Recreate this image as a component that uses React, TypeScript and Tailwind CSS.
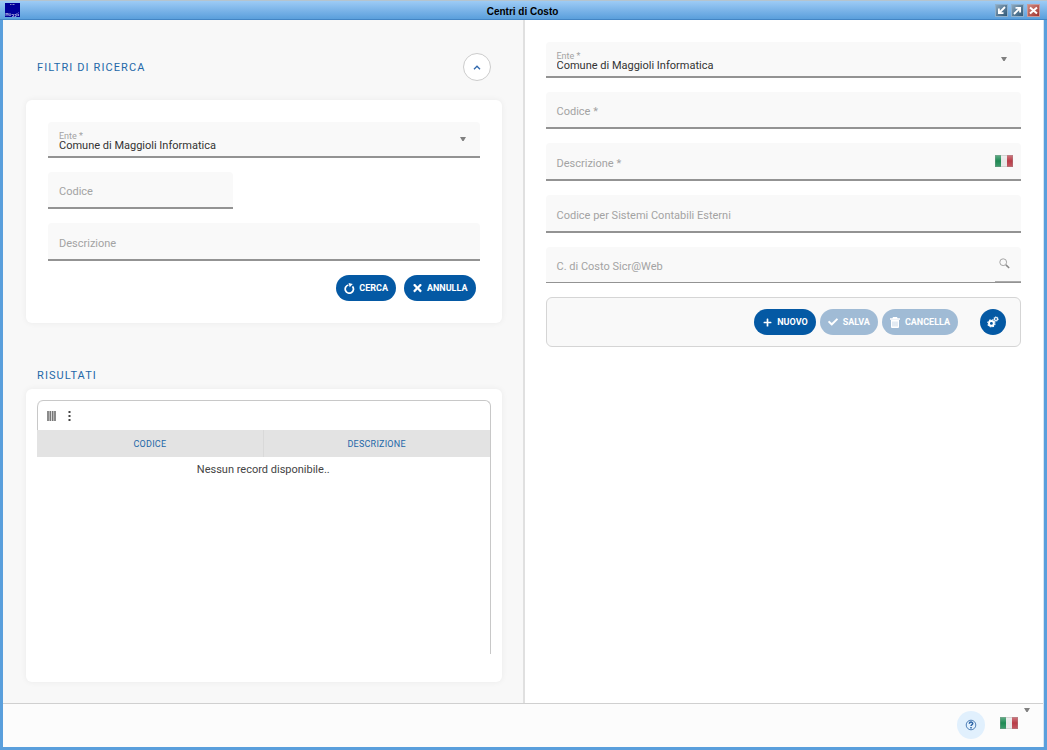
import type { ReactNode } from "react";
import { FaCheck, FaPlus, FaTimes } from "react-icons/fa";

function Flag() {
  return (
    <svg viewBox="0 0 18 12" className="h-3 w-[18px]" aria-hidden="true">
      <defs>
        <linearGradient id="shine" x1="0" y1="0" x2="0" y2="1">
          <stop offset="0" stopColor="#fff" stopOpacity="0.35" />
          <stop offset="0.5" stopColor="#fff" stopOpacity="0.05" />
          <stop offset="1" stopColor="#fff" stopOpacity="0.2" />
        </linearGradient>
      </defs>
      <rect width="6" height="12" fill="#12834a" />
      <rect x="6" width="6" height="12" fill="#e6e6e6" />
      <rect x="12" width="6" height="12" fill="#b5323e" />
      <rect width="18" height="12" fill="url(#shine)" />
      <rect x="0.5" y="0.5" width="17" height="11" fill="none" stroke="#999" strokeOpacity="0.3" />
    </svg>
  );
}

function Caret() {
  return (
    <svg viewBox="0 0 6 4" className="h-1 w-1.5" aria-hidden="true">
      <path d="M0 0h6L3.6 4H2.4z" fill="#808080" />
    </svg>
  );
}

function ReloadIcon() {
  return (
    <svg viewBox="0 0 12 12" className="size-[11px]" fill="none" aria-hidden="true">
      <path d="M4.800 2.200A4.500 4.500 0 1 0 9.200 3.600" stroke="#fff" strokeWidth="1.900" />
      <path d="M5 0l4.600 1.200L6.200 4.600z" fill="#fff" />
    </svg>
  );
}

function TrashIcon() {
  return (
    <svg viewBox="0 0 10 11" className="h-[11px] w-2.5" fill="#fff" aria-hidden="true">
      <path d="M3 0h4l.6 1.300H10v1.400H0V1.300h2.400z" />
      <path
        fillRule="evenodd"
        d="M1 2.700h8V10a1 1 0 0 1-1 1H2a1 1 0 0 1-1-1zM2.700 4.500v5h.6v-5zM4.700 4.500v5h.6v-5zM6.700 4.500v5h.6v-5z"
      />
    </svg>
  );
}

function GearsIcon() {
  return (
    <svg viewBox="0 0 12 12" className="size-3" fill="none" stroke="#fff" aria-hidden="true">
      <circle cx="4.4" cy="7.4" r="2.4" strokeWidth="1.900" />
      <circle cx="4.4" cy="7.4" r="3.6" strokeWidth="1.100" strokeDasharray="1.600 1.228" />
      <circle cx="9" cy="3" r="1.500" strokeWidth="1.200" />
      <circle cx="9" cy="3" r="2.300" strokeWidth="0.800" strokeDasharray="1 0.806" />
    </svg>
  );
}

function SearchIcon() {
  return (
    <svg viewBox="0 0 11 11" className="size-[11px]" fill="none" aria-hidden="true">
      <circle cx="4.2" cy="4.2" r="3.4" stroke="#a5a5a5" strokeWidth="1" />
      <path d="M6.900 6.900l3.300 3.100" stroke="#888" strokeWidth="1.500" />
    </svg>
  );
}

function HelpIcon() {
  return (
    <svg viewBox="0 0 12 12" className="size-3" fill="none" stroke="#2a62a5" aria-hidden="true">
      <circle cx="6" cy="6" r="4.800" strokeWidth="0.800" />
      <path d="M4.300 4.700c.1-2.300 3.500-2.100 3.400-.1C7.600 5.700 6 5.800 6 7.100" strokeWidth="1.500" />
      <path d="M6 8v1.400" strokeWidth="1.500" />
    </svg>
  );
}

function Logo() {
  return (
    <svg viewBox="0 0 15 14" className="h-3.5 w-[15px]" aria-hidden="true">
      <rect width="15" height="14" fill="#000099" />
      <path d="M5 1.500h5" stroke="#8a8ac8" strokeWidth="1" strokeDasharray="1 0.5" />
      <path
        d="M1 13v-3l1 1.500 1-1.500v3M4.500 12.500a1 1 0 1 1 1 0zM7 11.500h1.500v2H7M9.500 11.500h1.500v2H9.500M12 10v3M13.500 11v2M13.500 9.500v.7"
        fill="none"
        stroke="#c9c9ee"
        strokeWidth="0.7"
      />
    </svg>
  );
}

type FieldProps = {
  id: string;
  label: string;
  className?: string;
  children?: ReactNode;
};

function Field({ id, label, className = "h-[38px] border-b-2", children }: FieldProps) {
  return (
    <div className={`flex items-center rounded-t-sm border-[#939393] bg-[#f9f9f9] pl-[11px] ${className}`}>
      <label htmlFor={id} className="pt-1.5 text-[11px] text-[#a3a3a3]">
        {label}
      </label>
      <input id={id} type="text" className="h-full min-w-0 flex-1 bg-transparent px-1 text-[11px] outline-none" />
      {children}
    </div>
  );
}

function EnteSelect({ id }: { id: string }) {
  return (
    <div className="relative flex h-9 flex-col justify-end rounded-t-sm border-b-2 border-[#939393] bg-[#f9f9f9] px-[11px] pb-1">
      <label htmlFor={id} className="text-[9px] leading-2 text-[#a3a3a3]">
        Ente *
      </label>
      <select id={id} className="h-3 w-full appearance-none text-[11px] leading-3 text-[#333] outline-none">
        <option>Comune di Maggioli Informatica</option>
      </select>
      <span className="pointer-events-none absolute top-[15px] right-3.5">
        <Caret />
      </span>
    </div>
  );
}

type PillProps = { icon: ReactNode; children: string; disabled?: boolean };

function Pill({ icon, children, disabled }: PillProps) {
  return (
    <button
      type="button"
      disabled={disabled}
      className="flex h-[26px] items-center gap-1 rounded-full bg-[#0459a4] px-2 text-[9px] font-bold text-white disabled:bg-[#a0bbd5]"
    >
      <span className="flex w-[11px] justify-center">{icon}</span>
      <span className="pt-0.5">{children}</span>
    </button>
  );
}

const windowButton =
  "flex size-[13px] items-center justify-center border border-[#8fb0cc] bg-linear-to-br from-[#8ba7bd] to-[#2f5877]";

function TitleBar() {
  return (
    <header className="grid h-5 shrink-0 grid-cols-[1fr_auto_1fr] items-center border-t border-b border-t-[#b5c4ce] border-b-[#4385c4] bg-linear-to-b from-[#9dcbf5] to-[#5a9fdc] pr-[7px] pl-[5px]">
      <Logo />
      <h1 className="pt-0.5 font-['Liberation_Sans',sans-serif] text-[10px] font-bold text-black">Centri di Costo</h1>
      <div className="flex justify-end gap-[3px]">
        <button type="button" aria-label="Riduci" className={windowButton}>
          <svg viewBox="0 0 9 9" className="size-[9px]" fill="none" stroke="#fff" strokeWidth="1.800">
            <path d="M8 1L2.500 6.500M1.900 2.500v4.600h4.600" />
          </svg>
        </button>
        <button type="button" aria-label="Ingrandisci" className={windowButton}>
          <svg viewBox="0 0 9 9" className="size-[9px]" fill="none" stroke="#fff" strokeWidth="1.800">
            <path d="M1 8l5.500-5.500M2.500 1.900h4.600v4.600" />
          </svg>
        </button>
        <button
          type="button"
          aria-label="Chiudi"
          className="flex size-[13px] items-center justify-center border border-[#c99a9a] bg-linear-to-br from-[#d08a80] to-[#a03030]"
        >
          <svg viewBox="0 0 9 9" className="size-[9px]" fill="none" stroke="#fff" strokeWidth="2">
            <path d="M1 1.500l7 6M8 1.500l-7 6" />
          </svg>
        </button>
      </div>
    </header>
  );
}

const card = "rounded-md bg-white shadow-[0_0_6px_rgba(0,0,0,0.06)]";
const heading = "text-[11px] tracking-widest text-[#2468a8]";

function Filters() {
  return (
    <section>
      <div className="flex items-center justify-between px-[11px]">
        <h2 className={`pt-0.5 ${heading}`}>FILTRI DI RICERCA</h2>
        <button
          type="button"
          aria-label="Comprimi filtri"
          className="flex size-7 items-center justify-center rounded-full border border-[#ccc] bg-white"
        >
          <svg viewBox="0 0 8 5" className="h-[5px] w-2" fill="none" stroke="#2f68ad" strokeWidth="1.300">
            <path d="M1 4.300L4 1.200l3 3.100" />
          </svg>
        </button>
      </div>
      <form className={`mt-[19px] p-[22px] ${card}`}>
        <div className="flex flex-col gap-[14px]">
          <EnteSelect id="filter-ente" />
          <Field id="filter-codice" label="Codice" className="h-[37px] w-3/7 border-b-2" />
          <Field id="filter-descrizione" label="Descrizione" />
        </div>
        <div className="mt-[14px] flex justify-end gap-2 pr-1">
          <Pill icon={<ReloadIcon />}>CERCA</Pill>
          <Pill icon={<FaTimes className="size-3" />}>ANNULLA</Pill>
        </div>
      </form>
    </section>
  );
}

function Results() {
  return (
    <section className="mt-[45px] flex min-h-0 flex-1 flex-col">
      <h2 className={`pl-[11px] leading-4 ${heading}`}>RISULTATI</h2>
      <div className={`mt-[5px] min-h-0 flex-1 px-[11px] pt-[11px] pb-7 ${card}`}>
        <div className="flex h-full flex-col rounded-t-md border-t border-r border-[#c8c8c8]">
          <div className="flex h-[29px] shrink-0 items-center gap-3 rounded-tl-md border-l border-[#c8c8c8] pl-[9px]">
            <button type="button" aria-label="Colonne">
              <svg viewBox="0 0 9 10" className="h-2.5 w-[9px]" stroke="#777" strokeWidth="1.700">
                <path d="M1 0v10M3.300 0v10M5.700 0v10M8 0v10" />
              </svg>
            </button>
            <button type="button" aria-label="Altre opzioni">
              <svg viewBox="0 0 3 10" className="h-2.5 w-[3px]" fill="#444">
                <path d="M.5 0h2v2h-2zM.5 4h2v2h-2zM.5 8h2v2h-2z" />
              </svg>
            </button>
          </div>
          <table className="w-full table-fixed border-collapse">
            <thead>
              <tr className="h-[27px] bg-[#e3e3e3] text-[9px] tracking-wide text-[#2468a8]">
                <th className="border-r border-[#d9d9d9] pt-0.5 font-normal">CODICE</th>
                <th className="pt-0.5 font-normal">DESCRIZIONE</th>
              </tr>
            </thead>
            <tbody>
              <tr className="h-[26px]">
                <td colSpan={2} className="text-center text-[11px] text-[#444]">
                  Nessun record disponibile..
                </td>
              </tr>
            </tbody>
          </table>
        </div>
      </div>
    </section>
  );
}

function Detail() {
  return (
    <form className="min-w-0 flex-1 border-l-2 border-[#e0e0e0] bg-white pt-[22px] pr-[22px] pl-[21px]">
      <div className="flex flex-col gap-[14px]">
        <EnteSelect id="ente" />
        <Field id="codice" label="Codice *" className="h-[37px] border-b-2" />
        <Field id="descrizione" label="Descrizione *">
          <button type="button" aria-label="Lingua" className="pr-2">
            <Flag />
          </button>
        </Field>
        <Field id="codice-esterni" label="Codice per Sistemi Contabili Esterni" />
        <Field id="costo" label="C. di Costo Sicr@Web" className="h-9 border-b">
          <button
            type="button"
            aria-label="Cerca centro di costo"
            className="flex h-full w-[26px] items-center border-b border-[#aaa] pb-0.5 pl-1"
          >
            <SearchIcon />
          </button>
        </Field>
        <div className="flex h-[50px] items-center justify-end gap-1 rounded-md border border-[#d5d5d5] bg-[#f9f9f9] pr-3.5">
          <Pill icon={<FaPlus className="size-[9px]" />}>NUOVO</Pill>
          <Pill icon={<FaCheck className="size-2.5" />} disabled>
            SALVA
          </Pill>
          <Pill icon={<TrashIcon />} disabled>
            CANCELLA
          </Pill>
          <button
            type="button"
            aria-label="Impostazioni"
            className="ml-[18px] flex size-[26px] items-center justify-center rounded-full bg-[#0459a4]"
          >
            <GearsIcon />
          </button>
        </div>
      </div>
    </form>
  );
}

export default function App() {
  return (
    <div className="flex h-screen flex-col bg-[#5a9fdc] font-[Roboto,sans-serif]">
      <TitleBar />
      <div className="mx-[3px] mb-[3px] flex min-h-0 flex-1 flex-col border-r border-[#d5e4f2] bg-[#fcfcfc]">
        <main className="flex min-h-0 flex-1">
          <div className="flex min-w-0 flex-1 flex-col bg-[#f8f8f8] pt-[33px] pr-[21px] pb-[21px] pl-[23px]">
            <Filters />
            <Results />
          </div>
          <Detail />
        </main>
        <footer className="flex h-11 shrink-0 justify-end border-t border-[#d0d0d0] pr-[13px]">
          <button
            type="button"
            aria-label="Aiuto"
            className="mt-[7px] flex size-7 items-center justify-center rounded-full bg-[#e1f0fd]"
          >
            <HelpIcon />
          </button>
          <button type="button" aria-label="Cambia lingua" className="ml-[15px] flex gap-1.5">
            <span className="mt-[13px]">
              <Flag />
            </span>
            <span className="mt-1">
              <Caret />
            </span>
          </button>
        </footer>
      </div>
    </div>
  );
}
